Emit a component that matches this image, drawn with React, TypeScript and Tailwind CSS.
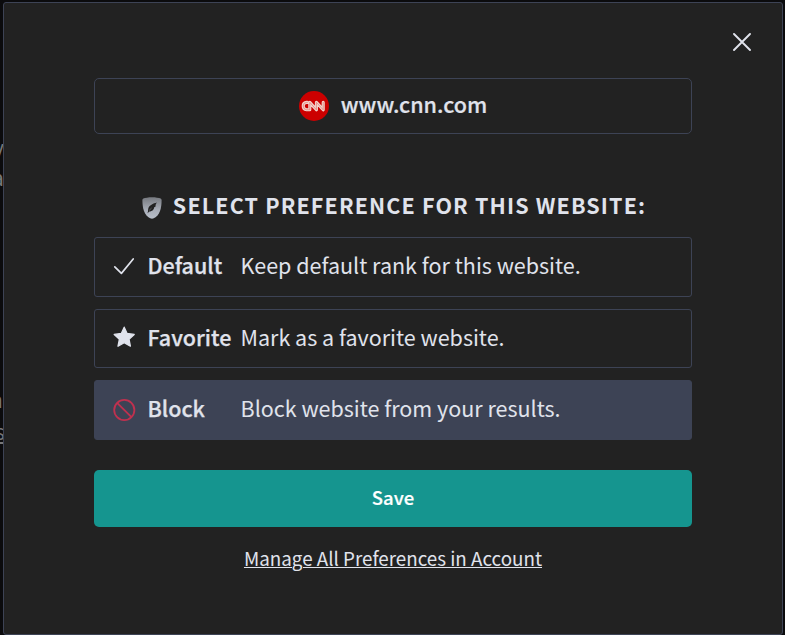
import type { ReactNode } from "react";

function CloseIcon() {
  return (
    <svg width="18" height="18" viewBox="0 0 18 18" fill="none" stroke="#e0e3ec" strokeWidth="1.9" strokeLinecap="round">
      <path d="M1 1 17 17M17 1 1 17" />
    </svg>
  );
}

function ShieldIcon() {
  return (
    <svg width="20" height="22" viewBox="0 0 20 22" className="mt-[3px]">
      <defs>
        <linearGradient id="shield" x1="0" y1="0" x2="0" y2="1">
          <stop offset="0" stopColor="#777a80" />
          <stop offset="0.6" stopColor="#a9aeb8" />
          <stop offset="1" stopColor="#b8bfca" />
        </linearGradient>
      </defs>
      <path d="M10 0.2C13.5 0.2 17 0.8 18.7 1.5Q19.6 2 19.6 3C19.6 11 18 18.3 11.8 21.3Q10 22.1 8.2 21.3C2 18.3 0.4 11 0.4 3Q0.4 2 1.3 1.5C3 0.8 6.5 0.2 10 0.2Z" fill="url(#shield)" />
      <path d="M15 5.6C11 6.5 7.2 8.4 6.3 11.6C5.8 13.4 6.4 14.3 5.5 16.2L7.3 14.4C10.2 14.3 12.2 12.4 12 10.4L13.6 9.6C13.4 8 13.7 6.9 15 5.6Z" fill="#222222" />
      <path d="M6.9 13.7 9.6 11" stroke="#8e929a" strokeWidth="0.5" />
    </svg>
  );
}

function CnnLogo() {
  return (
    <svg width="30" height="30" viewBox="0 0 30 30" fill="none" strokeLinejoin="round" strokeLinecap="round">
      <circle cx="15" cy="15" r="15" fill="#cc0000" />
      <path d="M8.4 11.4H7.6Q4.2 11.6 4.2 15T7.6 18.8H10.8V11.4L17.4 18.8V11.4L24.2 18.8V11.4" stroke="#f3d3cd" strokeWidth="3.1" />
      <path d="M8.4 11.4H7.6Q4.2 11.6 4.2 15T7.6 18.8H10.8V11.4L17.4 18.8V11.4L24.2 18.8V11.4" stroke="#dc6a60" strokeWidth="0.6" />
    </svg>
  );
}

function CheckIcon() {
  return (
    <svg width="22" height="22" viewBox="0 0 22 22" fill="none" stroke="#e0e3ec" strokeWidth="1.7" strokeLinecap="round" strokeLinejoin="round" className="-mt-[2px]">
      <path d="M1.8 11.8 8.4 18.4 20.2 4" />
    </svg>
  );
}

function StarIcon() {
  return (
    <svg width="22" height="22" viewBox="0 0 22 22" fill="#e0e3ec" stroke="#e0e3ec" strokeWidth="1.3" strokeLinejoin="round" className="-mt-[3px]">
      <path d="M11.2 1.2 14.1 7.5 21.2 8.4 16 13.2 17.4 20.2 11.2 16.8 5 20.2 6.4 13.2 1.2 8.4 8.3 7.5Z" />
    </svg>
  );
}

function BlockIcon() {
  return (
    <svg width="23" height="22" viewBox="0 0 23 22" fill="none" stroke="#c0314f" strokeWidth="1.8" className="-mr-px">
      <circle cx="11.3" cy="11" r="10.1" />
      <path d="M4.1 3.8 18.5 18.2" />
    </svg>
  );
}

function Option({ icon, name, text, className }: { icon: ReactNode; name: string; text: string; className: string }) {
  return (
    <button className={`flex w-full items-center rounded-[3px] border pl-[18px] text-left text-[21.5px] leading-8 ${className}`}>
      {icon}
      <span className="-mt-1 ml-[12.5px] w-[93px] shrink-0 font-medium whitespace-nowrap [-webkit-text-stroke:0.25px]">{name}</span>
      <span className="-mt-1 whitespace-nowrap">{text}</span>
    </button>
  );
}

export default function App() {
  return (
    <div className="relative h-[635px] w-[785px] overflow-hidden bg-[#0b0b0d] pt-[2px] pl-[3px] font-['Noto_Sans_CJK_SC','Noto_Sans',sans-serif] text-[#e0e3ec]">
      <span className="absolute top-[131px] -left-[7px] text-[21px] leading-8 text-[#777777]">y</span>
      <span className="absolute top-[161px] -left-[8px] text-[21px] leading-8 text-[#777777]">a</span>
      <span className="absolute top-[383px] -left-[10px] text-[21px] leading-8 text-[#777777]">n</span>
      <span className="absolute top-[415px] -left-[5px] text-[21px] leading-8 text-[#777777] underline underline-offset-2">s</span>
      <main className="relative flex h-[633px] w-[780px] flex-col items-center rounded-[3px] border border-[#3d4355] bg-[#222222] pt-[75px]">
        <button aria-label="Close" className="absolute top-[30px] right-[31px]">
          <CloseIcon />
        </button>
        <div className="flex h-14 w-[598px] items-center justify-center gap-3 rounded-[5px] border border-[#3d4355]">
          <CnnLogo />
          <span className="-mt-1 text-[21.5px] leading-8 font-medium [-webkit-text-stroke:0.2px]">www.cnn.com</span>
        </div>
        <h1 className="mt-14 ml-[2px] flex h-8 items-center gap-[11px] text-[21.5px] leading-8 font-bold tracking-[1.14px] whitespace-nowrap">
          <ShieldIcon />
          <span className="-mt-[2px]">SELECT PREFERENCE FOR THIS WEBSITE:</span>
        </h1>
        <div className="mt-[15px] flex w-[598px] flex-col gap-3">
          <Option icon={<CheckIcon />} name="Default" text="Keep default rank for this website." className="h-[60px] border-[#3d4355]" />
          <Option icon={<StarIcon />} name="Favorite" text="Mark as a favorite website." className="h-[59px] border-[#3d4355]" />
          <Option icon={<BlockIcon />} name="Block" text="Block website from your results." className="h-[60px] border-[#3d4355] bg-[#3d4355]" />
        </div>
        <button className="mt-[30px] h-[57px] w-[598px] rounded-[5px] bg-[#15958f] pb-1 text-[18.5px] leading-8 font-medium text-white [-webkit-text-stroke:0.2px]">Save</button>
        <a className="mt-[15px] text-[18.8px] leading-8 underline decoration-1 underline-offset-1">Manage All Preferences in Account</a>
      </main>
    </div>
  );
}
